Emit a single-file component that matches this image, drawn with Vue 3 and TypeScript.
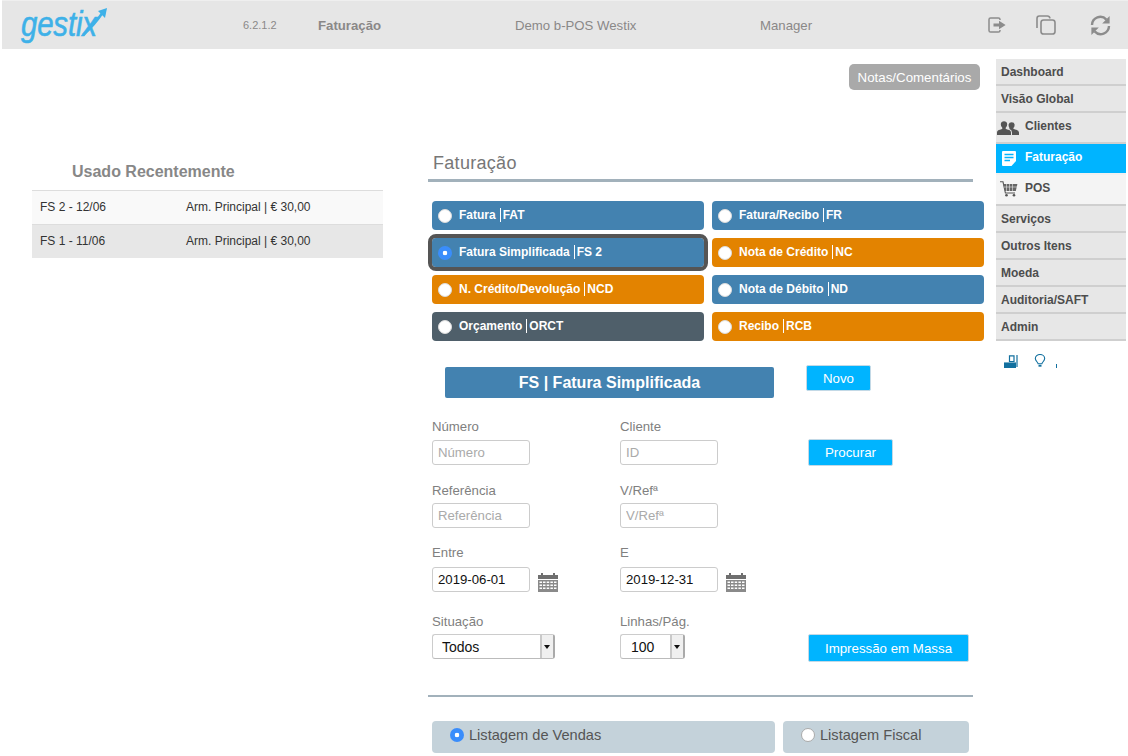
<template>
  <div class="page">
    <header class="topbar">
      <div class="logo">
        <span class="logo-txt">gestix</span>
        <svg class="logo-arrow" width="40" height="34" viewBox="0 0 40 34">
          <path d="M11 28 C18 22 25 14 31 5" fill="none" stroke="#3eb1e8" stroke-width="2.6" />
          <path d="M26 4 L35 1 L33 11 Z" fill="#3eb1e8" />
        </svg>
      </div>
      <span class="ver">6.2.1.2</span>
      <span class="mod">Faturação</span>
      <span class="company">Demo b-POS Westix</span>
      <span class="role">Manager</span>
      <div class="top-icons">
        <svg width="18" height="16" viewBox="0 0 18 16" fill="none" stroke="#8c8c8c" stroke-width="1.5">
          <path d="M12 3 V2.6 Q12 1 10.4 1 H2.6 Q1 1 1 2.6 V13.4 Q1 15 2.6 15 H10.4 Q12 15 12 13.4 V13" />
          <path d="M5.5 6.4 H11 V3.8 L17.6 8 L11 12.2 V9.6 H5.5 Z" fill="#8c8c8c" stroke="none" />
        </svg>
        <svg class="ic-copy" width="20" height="20" viewBox="0 0 20 20" fill="none" stroke="#8c8c8c" stroke-width="1.6">
          <path d="M1 13 V3.4 Q1 1 3.4 1 H11.4 Q13.6 1 14 3.4" />
          <rect x="5" y="5" width="14" height="14" rx="2.6" />
        </svg>
        <svg class="ic-sync" width="21" height="21" viewBox="0 0 21 21" fill="none" stroke="#8c8c8c" stroke-width="2.4">
          <path d="M2 10 A8.3 8.3 0 0 1 16.4 4.6" />
          <path d="M19 11 A8.3 8.3 0 0 1 4.6 16.4" />
          <path d="M19.6 1 V8.4 H12.2 Z" fill="#8c8c8c" stroke="none" />
          <path d="M1.4 20 V12.6 H8.8 Z" fill="#8c8c8c" stroke="none" />
        </svg>
      </div>
    </header>

    <div class="body">
      <aside class="recent">
        <h3>Usado Recentemente</h3>
        <div v-for="r in recent" :key="r.doc" class="recent-row">
          <span class="r-doc">{{ r.doc }}</span>
          <span>{{ r.info }}</span>
        </div>
      </aside>

      <main class="center">
        <div class="notes-row"><button class="notes">Notas/Comentários</button></div>
        <h2 class="title">Faturação</h2>

        <div class="doc-grid">
          <div v-for="d in docs" :key="d.code" class="doc" :class="[d.tone, { picked: d.sel }]">
            <span class="radio" :class="{ on: d.sel }"></span>
            <span class="doc-name">{{ d.name }}</span>
            <span class="doc-code">{{ d.code }}</span>
          </div>
        </div>

        <div class="head-row">
          <div class="doc-banner">FS | Fatura Simplificada</div>
          <button class="btn novo">Novo</button>
        </div>

        <div class="form">
          <div class="field lbl-22">
            <label>Número</label>
            <input class="inp" placeholder="Número" />
          </div>
          <div class="field lbl-22">
            <label>Cliente</label>
            <input class="inp" placeholder="ID" />
          </div>
          <button class="btn search">Procurar</button>

          <div class="field c1">
            <label>Referência</label>
            <input class="inp" placeholder="Referência" />
          </div>
          <div class="field c2">
            <label>V/Refª</label>
            <input class="inp" placeholder="V/Refª" />
          </div>

          <div class="field c1 lbl-22">
            <label>Entre</label>
            <div class="date-wrap">
              <input class="inp" value="2019-06-01" />
              <svg class="cal" width="20" height="20" viewBox="0 0 20 20">
                <path d="M0 3 H3 V1 H5 V3 H15 V1 H17 V3 H20 V7 H0 Z" fill="#6f6f6f" />
                <path d="M0 8 H20 V20 H0 Z M1.5 9.5 V11 H4 V9.5 Z M5 9.5 V11 H7.5 V9.5 Z M8.7 9.5 V11 H11.2 V9.5 Z M12.4 9.5 V11 H14.9 V9.5 Z M16 9.5 V11 H18.5 V9.5 Z M1.5 12.5 V14 H4 V12.5 Z M5 12.5 V14 H7.5 V12.5 Z M8.7 12.5 V14 H11.2 V12.5 Z M12.4 12.5 V14 H14.9 V12.5 Z M16 12.5 V14 H18.5 V12.5 Z M1.5 15.5 V17 H4 V15.5 Z M5 15.5 V17 H7.5 V15.5 Z M8.7 15.5 V17 H11.2 V15.5 Z M12.4 15.5 V17 H14.9 V15.5 Z M16 15.5 V17 H18.5 V15.5 Z" fill="#8a8a8a" fill-rule="evenodd" />
              </svg>
            </div>
          </div>
          <div class="field c2 lbl-22">
            <label>E</label>
            <div class="date-wrap">
              <input class="inp" value="2019-12-31" />
              <svg class="cal" width="20" height="20" viewBox="0 0 20 20">
                <path d="M0 3 H3 V1 H5 V3 H15 V1 H17 V3 H20 V7 H0 Z" fill="#6f6f6f" />
                <path d="M0 8 H20 V20 H0 Z M1.5 9.5 V11 H4 V9.5 Z M5 9.5 V11 H7.5 V9.5 Z M8.7 9.5 V11 H11.2 V9.5 Z M12.4 9.5 V11 H14.9 V9.5 Z M16 9.5 V11 H18.5 V9.5 Z M1.5 12.5 V14 H4 V12.5 Z M5 12.5 V14 H7.5 V12.5 Z M8.7 12.5 V14 H11.2 V12.5 Z M12.4 12.5 V14 H14.9 V12.5 Z M16 12.5 V14 H18.5 V12.5 Z M1.5 15.5 V17 H4 V15.5 Z M5 15.5 V17 H7.5 V15.5 Z M8.7 15.5 V17 H11.2 V15.5 Z M12.4 15.5 V17 H14.9 V15.5 Z M16 15.5 V17 H18.5 V15.5 Z" fill="#8a8a8a" fill-rule="evenodd" />
              </svg>
            </div>
          </div>

          <div class="field c1">
            <label>Situação</label>
            <div class="combo combo-wide"><span>Todos</span><i class="arr"></i></div>
          </div>
          <div class="field c2">
            <label>Linhas/Pág.</label>
            <div class="combo combo-small"><span>100</span><i class="arr"></i></div>
          </div>
          <button class="btn mass">Impressão em Massa</button>
        </div>

        <hr class="rule" />

        <div class="lists">
          <div class="list-opt wide"><span class="radio on"></span>Listagem de Vendas</div>
          <div class="list-opt narrow"><span class="radio edge"></span>Listagem Fiscal</div>
        </div>
      </main>

      <nav class="side">
        <div class="side-list">
          <div v-for="m in menu" :key="m.label" class="side-item" :class="{ active: m.active, light: m.icon === 'pos', tall: m.icon }">
            <svg v-if="m.icon === 'users'" class="side-ic users-ic" width="22" height="14" viewBox="0 0 22 16" preserveAspectRatio="none" fill="#555">
              <path d="M0 16 V13 Q0 10.6 3 10 L5 9 Q5.6 8.4 5.3 7.6 Q3.6 5.6 3.8 3.4 Q4.2 .4 7 .4 Q9.8 .4 10.2 3.4 Q10.4 5.6 8.7 7.6 Q8.4 8.4 9 9 L11 10 Q14 10.6 14 13 V16 Z" />
              <path d="M15 16 V13 Q15 10.4 12.4 9.2 Q12.2 8.8 12.6 8.4 Q11.2 6 11.7 3.6 Q12.2 1.4 14.6 1.4 Q17.4 1.4 17.6 4 Q17.8 6.4 16.4 8 Q16.2 8.8 16.8 9.2 L19 10 Q22 10.8 22 13 V16 Z" />
            </svg>
            <svg v-else-if="m.icon === 'doc'" class="side-ic doc-ic" width="14" height="15" viewBox="0 0 14 15">
              <path d="M0 1 Q0 0 1 0 H13 Q14 0 14 1 V10 L9.5 15 H1 Q0 15 0 14 Z" fill="#fff" />
              <path d="M2.5 3.5 H11.5 M2.5 6.5 H11.5 M2.5 9.5 H8" stroke="#00b4ff" stroke-width="1.3" />
            </svg>
            <svg v-else-if="m.icon === 'pos'" class="side-ic pos-ic" width="18" height="16" viewBox="0 0 18 16">
              <path d="M0 .8 H3 L5.4 12 H15" fill="none" stroke="#555" stroke-width="1.1" />
              <path d="M3.4 3 H17.4 L15.8 10 H5 Z" fill="#666" />
              <path d="M6.5 3 V10 M9.5 3 V10 M12.5 3 V10 M4 6 H17" stroke="#e9e9e9" stroke-width=".6" />
              <circle cx="6.5" cy="14.3" r="1.3" fill="#555" /><circle cx="14" cy="14.3" r="1.3" fill="#555" />
            </svg>
            <span>{{ m.label }}</span>
          </div>
        </div>
        <div class="side-tools">
          <svg width="14" height="13" viewBox="0 0 14 14" preserveAspectRatio="none">
            <path d="M0 8 H12 V14 H0 Z" fill="#12709f" />
            <path d="M5.5 1 H10 V7 H5.5 Z" fill="none" stroke="#12709f" stroke-width="1.2" />
            <path d="M13 0 V13" stroke="#12709f" stroke-width="1.2" />
          </svg>
          <svg width="12" height="14" viewBox="0 0 12 15" fill="none" stroke="#12709f" stroke-width="1.2">
            <path d="M4 10.5 C3.6 8.6 1 7.4 1 4.8 A4.9 4.2 0 0 1 11 4.8 C11 7.4 8.4 8.6 8 10.5 Z" />
            <path d="M4.4 12.6 H7.6" stroke-width="2" />
          </svg>
          <i class="tick"></i>
        </div>
      </nav>
    </div>
  </div>
</template>

<script setup lang="ts">
interface DocType { name: string; code: string; tone: string; sel?: boolean }
interface MenuItem { label: string; icon?: string; active?: boolean }

const recent = [
  { doc: 'FS 2 - 12/06', info: 'Arm. Principal | € 30,00' },
  { doc: 'FS 1 - 11/06', info: 'Arm. Principal | € 30,00' },
]

const docs: DocType[] = [
  { name: 'Fatura', code: 'FAT', tone: 'blue' },
  { name: 'Fatura/Recibo', code: 'FR', tone: 'blue' },
  { name: 'Fatura Simplificada', code: 'FS 2', tone: 'blue', sel: true },
  { name: 'Nota de Crédito', code: 'NC', tone: 'orange' },
  { name: 'N. Crédito/Devolução', code: 'NCD', tone: 'orange' },
  { name: 'Nota de Débito', code: 'ND', tone: 'blue' },
  { name: 'Orçamento', code: 'ORCT', tone: 'slate' },
  { name: 'Recibo', code: 'RCB', tone: 'orange' },
]

const menu: MenuItem[] = [
  { label: 'Dashboard' },
  { label: 'Visão Global' },
  { label: 'Clientes', icon: 'users' },
  { label: 'Faturação', icon: 'doc', active: true },
  { label: 'POS', icon: 'pos' },
  { label: 'Serviços' },
  { label: 'Outros Itens' },
  { label: 'Moeda' },
  { label: 'Auditoria/SAFT' },
  { label: 'Admin' },
]
</script>

<style>
html, body { margin: 0; background: #fff; }
</style>

<style scoped>
* { box-sizing: border-box; }
.page {
  width: 1128px; height: 756px; overflow: hidden;
  font-family: "Liberation Sans", Arial, sans-serif;
  background: #fff;
}

.topbar {
  display: flex; align-items: center;
  height: 49px; margin-left: 2px;
  background: #e6e6e6;
  border-top: 1px solid #efefef;
  color: #8a8888;
  font-size: 13.2px;
}
.logo { width: 241px; padding-left: 19px; position: relative; height: 100%; }
.logo-txt {
  display: block;
  font-size: 35px; font-style: italic; letter-spacing: -.2px;
  color: #3eb1e8; line-height: 46px;
  -webkit-text-stroke: .6px #3eb1e8;
  transform: scaleX(.84); transform-origin: left center;
}
.logo-arrow { position: absolute; left: 70px; top: 6px; }
.ver { width: 75px; font-size: 11px; }
.mod { width: 197px; font-weight: bold; }
.company { width: 245px; }
.role { width: 228px; }
.top-icons { display: flex; align-items: center; }
.ic-copy { margin-left: 30px; }
.ic-sync { margin-left: 34px; }

.body { display: flex; }

.recent { width: 428px; padding: 114px 45px 0 32px; }
.recent h3 {
  margin: 0; height: 27px; padding-left: 40px;
  font-size: 16px; line-height: 18px; color: #878787;
}
.recent-row {
  display: flex; align-items: center;
  height: 34px;
  padding: 0 0 2px 8px;
  font-size: 12px; color: #333;
  background: #f9f9f9;
  border-top: 1px solid #ddd;
}
.recent-row + .recent-row { background: #e7e7e7; }
.r-doc { width: 146px; }

.center { width: 568px; }
.notes-row { display: flex; justify-content: flex-end; padding: 15px 16px 0 0; height: 104px; }
.notes {
  height: 26px; width: 131px; padding: 0;
  border: 0; border-radius: 5px;
  background: #a9a9a9; color: #fff;
  font: 13.3px "Liberation Sans", Arial, sans-serif;
}
.title {
  margin: 0; width: 545px; height: 29px;
  padding: 1px 0 0 5px;
  font-size: 18px; font-weight: normal; line-height: 18px; letter-spacing: .3px;
  color: #777;
  border-bottom: 3px solid #a2b1bb;
}

.doc-grid {
  display: grid; grid-template-columns: 272px 272px; column-gap: 8px; row-gap: 8px;
  padding: 19px 0 0 4px;
}
.doc {
  display: flex; align-items: center;
  height: 29px; padding-left: 6px;
  border-radius: 4px;
  color: #fff; font-size: 12px; font-weight: bold;
}
.blue { background: #4382b0; }
.orange { background: #e38300; }
.slate { background: #4f5f6a; }
.doc.picked { outline: 4px solid #555; }
.radio {
  width: 14px; height: 14px; margin-right: 7px; flex: none;
  border-radius: 50%; background: #fff;
  border: 1px solid #dcdcdc;
}
.radio.on { border: 0; background: radial-gradient(circle, #fff 0 2px, #3a8dfb 2.6px); }
.radio.edge { border: 1px solid #aaa; }
.doc-name { margin-top: -1px; padding-right: 4px; border-right: 1px solid #fff; line-height: 14px; }
.doc-code { margin-top: -1px; padding-left: 2px; }

.head-row { display: flex; align-items: flex-start; padding: 26px 0 0 17px; }
.doc-banner {
  width: 329px; height: 31px;
  background: #4382b0; color: #fff; border-radius: 2px;
  font-size: 16px; font-weight: bold; line-height: 31px; text-align: center;
}
.btn {
  height: 26px; padding: 0; border: 1px solid #c3d9e6; border-radius: 2px;
  background: #00b4ff; color: #fff;
  font: 13.3px "Liberation Sans", Arial, sans-serif;
}
.novo { width: 65px; margin: -2px 0 0 32px; }

.form {
  display: grid;
  grid-template-columns: 188px 188px auto;
  grid-template-rows: 64px 62px 69px auto;
  padding: 20px 0 0 4px;
}
.c1 { grid-column: 1; }
.c2 { grid-column: 2; }
.field label { display: block; height: 21px; font-size: 13.2px; line-height: 18px; color: #808080; }
.lbl-22 label { height: 22px; }
.inp {
  display: block; width: 98px; height: 25px; padding: 0 5px;
  border: 1px solid #ccc; border-radius: 3px;
  font: 13.2px "Liberation Sans", Arial, sans-serif; color: #111;
  background: #fff; outline: none;
}
.inp::placeholder { color: #aaa; }
.date-wrap { display: flex; align-items: center; gap: 8px; }
.cal { margin-top: 6px; }
.search { width: 85px; height: 27px; margin-top: 21px; }
.combo {
  display: flex; justify-content: space-between; align-items: center;
  height: 25px;
  border: 1px solid #ccc; border-radius: 3px;
  border-right: 2px solid #aaa; border-bottom-color: #bbb;
  font-size: 14px; color: #111; background: #fff;
}
.combo-wide { width: 123px; padding-left: 9px; }
.combo-small { width: 65px; padding-left: 10px; }
.arr {
  width: 13px; height: 23px;
  background: linear-gradient(90deg, #c9c9c9 0 2px, #f0f0f0 2px);
  position: relative;
}
.arr::after {
  content: ""; position: absolute; left: 4px; top: 10px;
  border: 3px solid transparent; border-top: 4px solid #111; border-bottom: 0;
}
.mass { width: 161px; height: 28px; margin-top: 21px; }

.rule { width: 545px; height: 2px; margin: 33px 0 0; border: 0; background: #a2b1bb; }

.lists { display: flex; gap: 8px; padding: 24px 0 0 4px; }
.list-opt {
  display: flex; align-items: flex-start; height: 32px; padding-top: 6px;
  border-radius: 4px;
  background: #c4d2da; color: #555; font-size: 14.6px;
}
.list-opt .radio { margin: 1px 5px 0 0; }
.wide { width: 343px; padding-left: 18px; }
.narrow { width: 186px; padding-left: 18px; }

.side { width: 130px; padding-top: 10px; }
.side-list { display: flex; flex-direction: column; }
.side-item {
  display: flex; align-items: center;
  height: 27px; padding-left: 5px;
  background: #e7e7e7;
  border-bottom: 2px solid #cfcfcf;
  color: #4d4d4d; font-size: 12px; font-weight: bold;
}
.side-item.tall { height: 31px; padding-bottom: 4px; }
.side-item.light { background: #f4f4f4; }
.side-item.active { background: #00b4ff; color: #fff; border-bottom: 2px solid #f0f0f0; }
.side-ic { flex: none; }
.users-ic { margin: 4px 6px 0 -4px; }
.doc-ic { margin: 4px 9px 0 1px; }
.pos-ic { margin: 3px 7px 0 -1px; }
.side-tools { display: flex; align-items: flex-end; gap: 16px; padding: 13px 0 0 8px; }
.tick { width: 1px; height: 4px; background: #12709f; margin-left: -6px; }
</style>
